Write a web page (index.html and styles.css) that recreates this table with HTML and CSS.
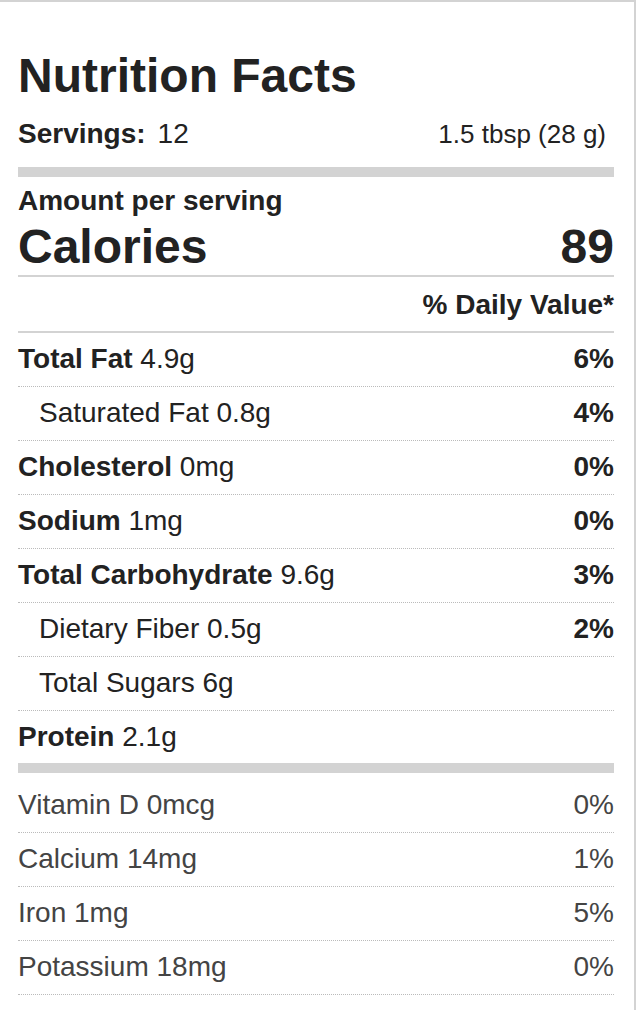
FILE: index.html
```html
<!DOCTYPE html>
<html lang="en">
<head>
  <meta charset="UTF-8">
  <meta name="viewport" content="width=device-width, initial-scale=1.0">
  <title>Nutrition Facts</title>
  <link rel="stylesheet" href="styles.css">
</head>
<body>
  <div class="label">
    <h1 class="label-title">Nutrition Facts</h1>
    <div class="servings">
      <div><strong>Servings:</strong><span class="servings-count">12</span></div>
      <div class="serving-size">1.5 tbsp (28 g)</div>
    </div>

    <div class="bar"></div>

    <div class="amount">Amount per serving</div>
    <div class="calories">
      <span>Calories</span>
      <span>89</span>
    </div>
    <div class="daily-head">% Daily Value*</div>

    <div class="row">
      <span><strong>Total Fat</strong> 4.9g</span>
      <strong>6%</strong>
    </div>
    <div class="row row--sub">
      <span>Saturated Fat 0.8g</span>
      <strong>4%</strong>
    </div>
    <div class="row">
      <span><strong>Cholesterol</strong> 0mg</span>
      <strong>0%</strong>
    </div>
    <div class="row">
      <span><strong>Sodium</strong> 1mg</span>
      <strong>0%</strong>
    </div>
    <div class="row">
      <span><strong>Total Carbohydrate</strong> 9.6g</span>
      <strong>3%</strong>
    </div>
    <div class="row row--sub">
      <span>Dietary Fiber 0.5g</span>
      <strong>2%</strong>
    </div>
    <div class="row row--sub">
      <span>Total Sugars 6g</span>
    </div>
    <div class="row row--last">
      <span><strong>Protein</strong> 2.1g</span>
    </div>

    <div class="bar bar--vitamins"></div>

    <div class="row row--vitamin">
      <span>Vitamin D 0mcg</span>
      <span>0%</span>
    </div>
    <div class="row row--vitamin">
      <span>Calcium 14mg</span>
      <span>1%</span>
    </div>
    <div class="row row--vitamin">
      <span>Iron 1mg</span>
      <span>5%</span>
    </div>
    <div class="row row--vitamin">
      <span>Potassium 18mg</span>
      <span>0%</span>
    </div>
  </div>
</body>
</html>
```

FILE: styles.css
```css
body {
  margin: 0;
  padding: 0;
  background: #fff;
  font-family: "Liberation Sans", Arial, sans-serif;
  color: #222;
}

.label {
  width: 596px;
  padding: 46px 20px 40px 18px;
  border-top: 2px solid #d3d3d3;
  border-right: 2px solid #d3d3d3;
  font-size: 28px;
  line-height: 32px;
}

.label-title {
  margin: 0;
  font-size: 48px;
  line-height: 56px;
  font-weight: bold;
}

.servings {
  display: flex;
  justify-content: space-between;
  align-items: baseline;
  margin-top: 14px;
}

.servings-count {
  margin-left: 12px;
}

.serving-size {
  font-size: 26px;
  padding-right: 8px;
}

.bar {
  height: 10px;
  background: #d3d3d3;
  margin-top: 17px;
}

.bar--vitamins {
  margin-top: 0;
  margin-bottom: 6px;
}

.amount {
  margin-top: 8px;
  font-weight: bold;
}

.calories {
  display: flex;
  justify-content: space-between;
  margin-top: 2px;
  font-size: 48px;
  line-height: 56px;
  font-weight: bold;
  border-bottom: 2px solid #d3d3d3;
}

.daily-head {
  text-align: right;
  font-weight: bold;
  padding: 12px 0 10px;
  border-bottom: 2px solid #d3d3d3;
}

.row {
  display: flex;
  justify-content: space-between;
  padding: 10px 0 11px;
  border-bottom: 1px dotted #bbb;
}

.row--sub {
  padding-left: 21px;
}

.row--last {
  border-bottom: none;
  padding-bottom: 10px;
}

.row--vitamin {
  color: #444;
}
```
